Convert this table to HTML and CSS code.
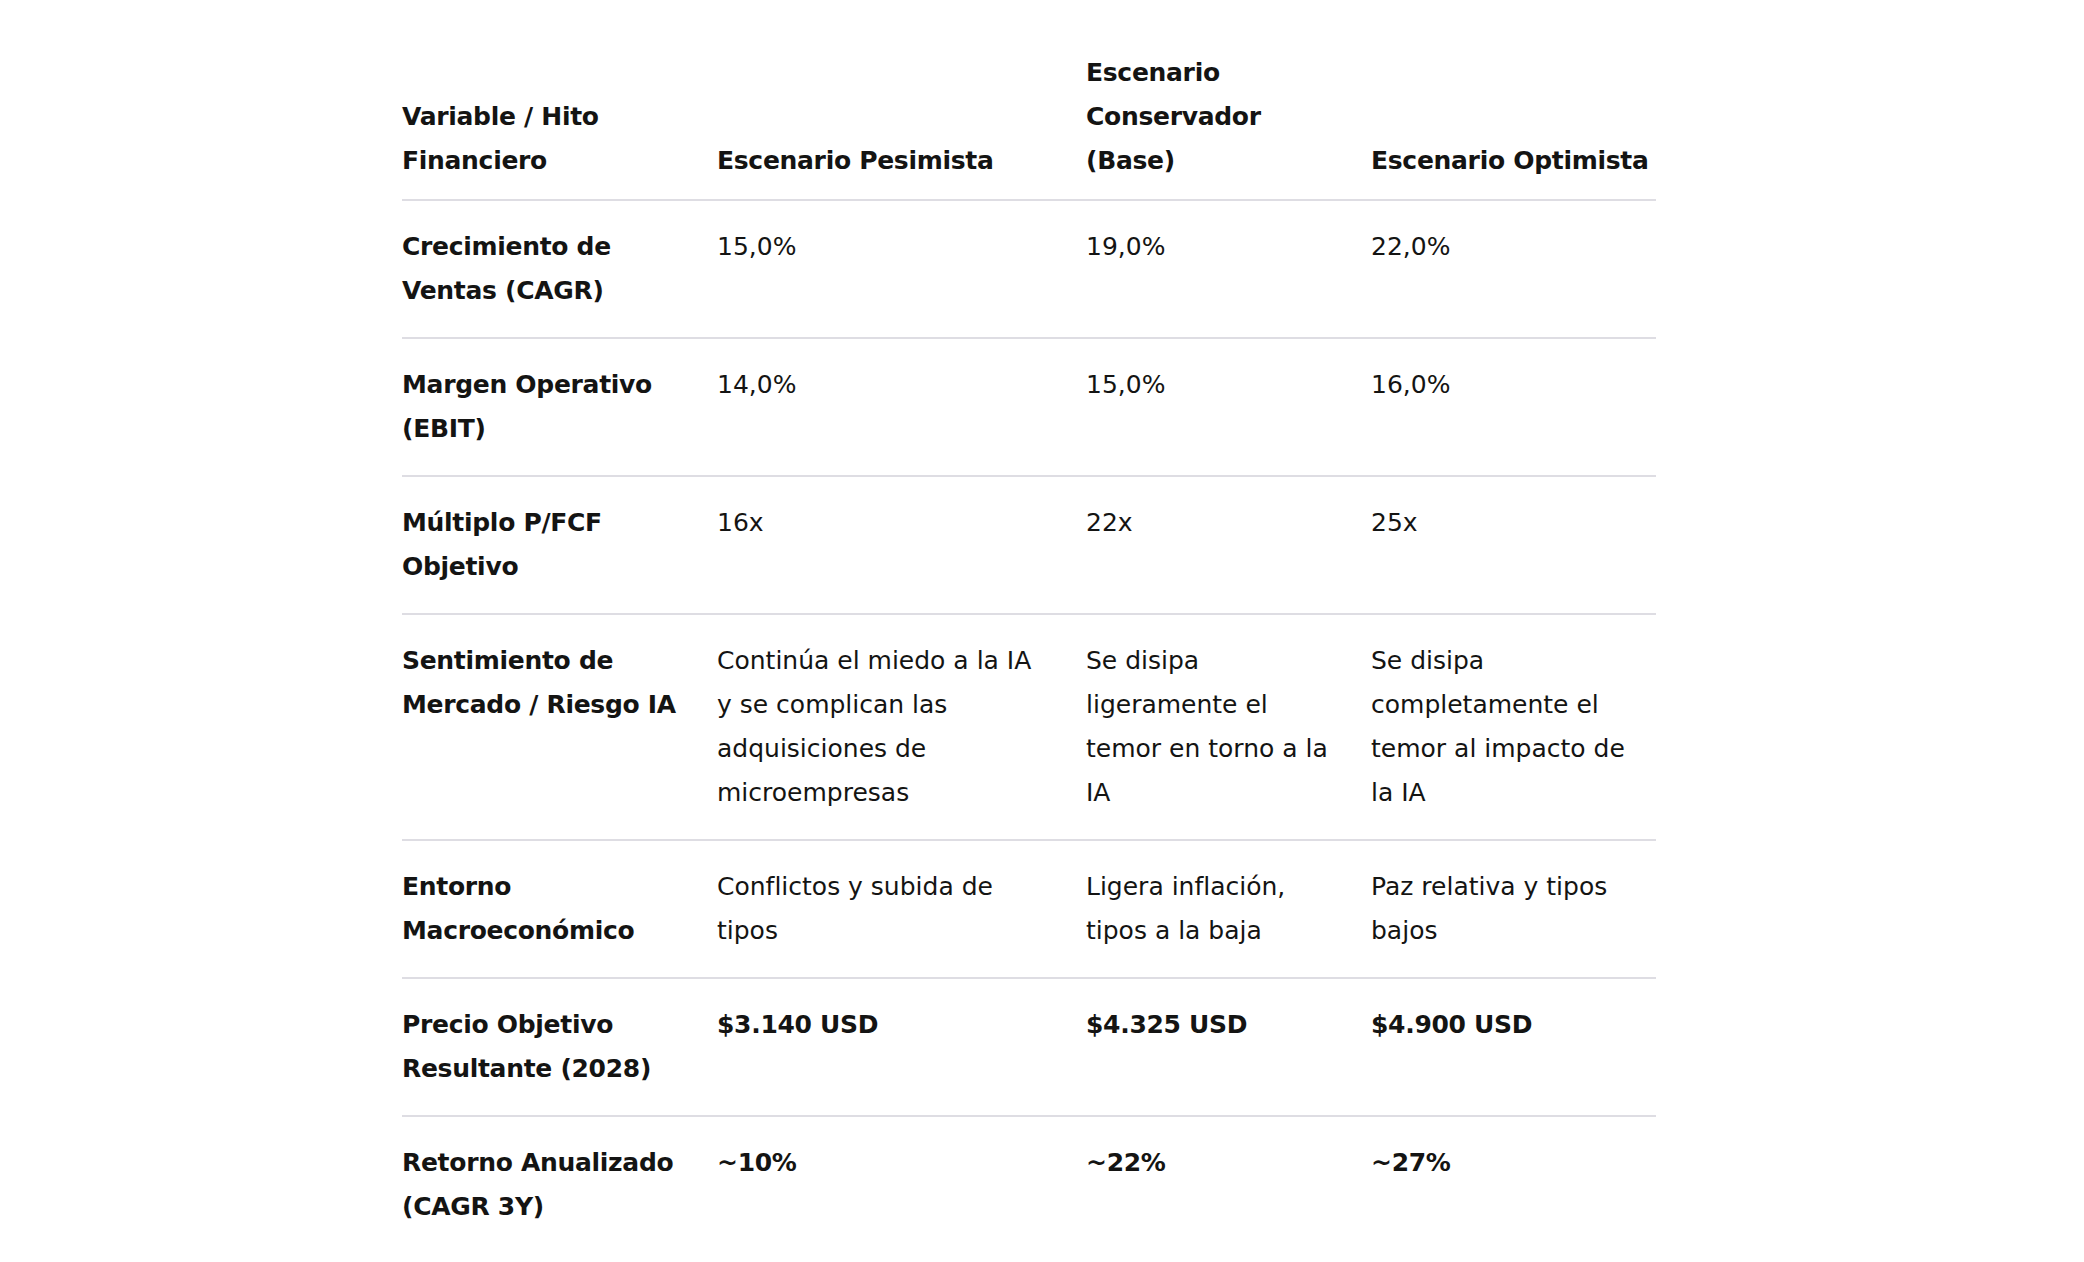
FILE: index.html
```html
<!DOCTYPE html>
<html lang="es">
<head>
<meta charset="utf-8">
<title>Escenarios</title>
<link rel="stylesheet" href="styles.css">
</head>
<body>
<div class="page">
  <table class="scen">
    <colgroup>
      <col class="c1"><col class="c2"><col class="c3"><col class="c4">
    </colgroup>
    <thead>
      <tr>
        <th class="p1">Variable / Hito Financiero</th>
        <th class="p2">Escenario Pesimista</th>
        <th class="p3">Escenario Conservador (Base)</th>
        <th class="p4">Escenario Optimista</th>
      </tr>
    </thead>
    <tbody>
      <tr>
        <td class="p1 lbl">Crecimiento de Ventas (CAGR)</td>
        <td class="p2">15,0%</td><td class="p3">19,0%</td><td class="p4">22,0%</td>
      </tr>
      <tr>
        <td class="p1 lbl">Margen Operativo (EBIT)</td>
        <td class="p2">14,0%</td><td class="p3">15,0%</td><td class="p4">16,0%</td>
      </tr>
      <tr>
        <td class="p1 lbl">Múltiplo P/FCF Objetivo</td>
        <td class="p2">16x</td><td class="p3">22x</td><td class="p4">25x</td>
      </tr>
      <tr>
        <td class="p1 lbl">Sentimiento de Mercado / Riesgo IA</td>
        <td class="p2">Continúa el miedo a la IA y se complican las adquisiciones de microempresas</td>
        <td class="p3">Se disipa ligeramente el temor en torno a la IA</td>
        <td class="p4">Se disipa completamente el temor al impacto de la IA</td>
      </tr>
      <tr>
        <td class="p1 lbl">Entorno Macroeconómico</td>
        <td class="p2">Conflictos y subida de tipos</td>
        <td class="p3">Ligera inflación, tipos a la baja</td>
        <td class="p4">Paz relativa y tipos bajos</td>
      </tr>
      <tr>
        <td class="p1 lbl">Precio Objetivo Resultante (2028)</td>
        <td class="p2 strong">$3.140 USD</td><td class="p3 strong">$4.325 USD</td><td class="p4 strong">$4.900 USD</td>
      </tr>
      <tr>
        <td class="p1 lbl">Retorno Anualizado (CAGR 3Y)</td>
        <td class="p2 strong">~10%</td><td class="p3 strong">~22%</td><td class="p4 strong">~27%</td>
      </tr>
    </tbody>
  </table>
</div>
</body>
</html>
```

FILE: styles.css
```css
html, body {
  margin: 0;
  padding: 0;
  background: #ffffff;
}

body {
  font-family: "DejaVu Sans", "Noto Sans", sans-serif;
  color: #141413;
  font-size: 25px;
  line-height: 44px;
}

.page {
  padding: 51px 0 0 402px;
}

.scen {
  border-collapse: collapse;
  table-layout: fixed;
  width: 1254px;
}

.c1 { width: 315px; }
.c2 { width: 369px; }
.c3 { width: 285px; }
.c4 { width: 285px; }

.scen th,
.scen td {
  padding-left: 0;
  border-bottom: 2px solid #dedde3;
}

.scen th {
  text-align: left;
  vertical-align: bottom;
  font-weight: 700;
  letter-spacing: -0.3px;
  padding-top: 0;
  padding-bottom: 16px;
}

.scen td {
  vertical-align: top;
  font-weight: 400;
  padding-top: 24px;
  padding-bottom: 24px;
}

.scen .p1 { padding-right: 25px; }
.scen .p2 { padding-right: 44px; }
.scen .p3 { padding-right: 33px; }
.scen .p4 { padding-right: 5px; }

.scen tbody tr:last-child td {
  border-bottom: none;
}

.scen td.lbl,
.scen td.strong {
  font-weight: 700;
  letter-spacing: -0.3px;
}
```
